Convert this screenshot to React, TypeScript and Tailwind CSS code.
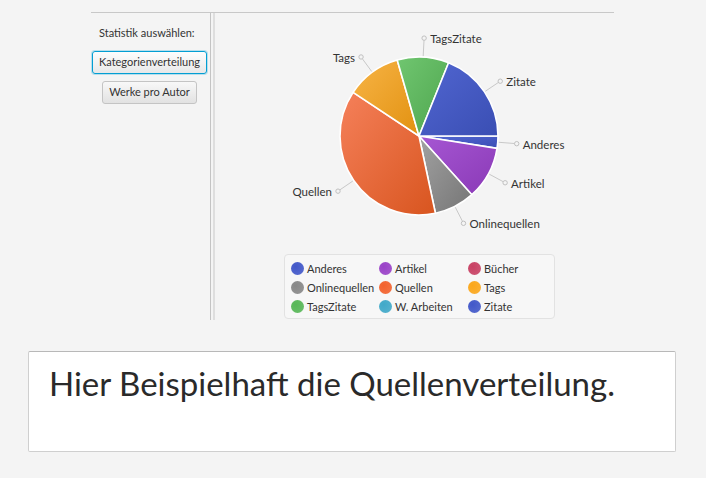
import React from 'react';

interface Slice {
  name: string;
  from: number;
  to: number;
  light: string;
  dark: string;
}

// angles in degrees, clockwise from east (screen coords)
const slices: Slice[] = [
  { name: 'Anderes', from: 0, to: 9, light: '#5468d4', dark: '#3a4eb5' },
  { name: 'Artikel', from: 9, to: 48, light: '#a657d3', dark: '#8a39b6' },
  { name: 'Onlinequellen', from: 48, to: 78, light: '#a2a2a2', dark: '#757575' },
  { name: 'Quellen', from: 78, to: 213.5, light: '#f5805a', dark: '#d8551f' },
  { name: 'Tags', from: 213.5, to: 254, light: '#f7b446', dark: '#e29110' },
  { name: 'TagsZitate', from: 254, to: 292, light: '#70c670', dark: '#4ea54e' },
  { name: 'Zitate', from: 292, to: 360, light: '#5166d1', dark: '#3a4eb3' },
];

const legend = [
  { name: 'Anderes', color: '#4258c9' },
  { name: 'Artikel', color: '#9a42c8' },
  { name: 'Bücher', color: '#c84164' },
  { name: 'Onlinequellen', color: '#888888' },
  { name: 'Quellen', color: '#f3622d' },
  { name: 'Tags', color: '#fba71b' },
  { name: 'TagsZitate', color: '#57b757' },
  { name: 'W. Arbeiten', color: '#41a9c9' },
  { name: 'Zitate', color: '#4258c9' },
];

const FONT = '"Lato", "Open Sans", sans-serif';

const CX = 419;
const CY = 136;
const R = 79;

const pt = (deg: number, r: number) => {
  const a = (deg * Math.PI) / 180;
  return [CX + r * Math.cos(a), CY + r * Math.sin(a)];
};

function PieChart() {
  return (
    <svg width={399} height={236} viewBox="215 13 399 236" className="block">
      <defs>
        {slices.map((s) => (
          <linearGradient key={s.name} id={`g-${s.name}`} x1="0" y1="0" x2="1" y2="1">
            <stop offset="0%" stopColor={s.light} />
            <stop offset="100%" stopColor={s.dark} />
          </linearGradient>
        ))}
      </defs>
      {slices.map((s) => {
        const [x1, y1] = pt(s.from, R);
        const [x2, y2] = pt(s.to, R);
        const large = s.to - s.from > 180 ? 1 : 0;
        return (
          <path
            key={s.name}
            d={`M${CX},${CY} L${x1},${y1} A${R},${R} 0 ${large} 1 ${x2},${y2} Z`}
            fill={`url(#g-${s.name})`}
            stroke="#ffffff"
            strokeWidth={1.6}
            strokeLinejoin="round"
          />
        );
      })}
      {slices.map((s) => {
        const mid = (s.from + s.to) / 2;
        const [ax, ay] = pt(mid, R + 1);
        const [bx, by] = pt(mid, 96);
        const [cx, cy] = pt(mid, 98);
        const right = Math.cos((mid * Math.PI) / 180) > -0.01;
        return (
          <g key={`l-${s.name}`}>
            <line x1={ax} y1={ay} x2={bx} y2={by} stroke="#c8c8c8" strokeWidth={1} />
            <circle cx={cx} cy={cy} r={2.2} fill="#f4f4f4" stroke="#c0c0c0" strokeWidth={1} />
            <text
              x={right ? cx + 6 : cx - 6}
              y={cy + 0.5}
              textAnchor={right ? 'start' : 'end'}
              dominantBaseline="central"
              fontSize={11.5}
              fill="#333333"
              style={{ fontFamily: FONT }}
            >
              {s.name}
            </text>
          </g>
        );
      })}
    </svg>
  );
}

function Legend() {
  return (
    <div className="ml-[69px] mt-[5px] w-[271px] h-[65px] rounded-[4px] border border-[#e2e2e2] bg-[#f7f7f7] grid grid-cols-[88px_89px_1fr] content-start pt-[5px] pl-[6px] gap-y-[3px]">
      {legend.map((l) => (
        <div key={l.name} className="flex items-center gap-[3px] h-[16px]">
          <span
            className="w-[13px] h-[13px] rounded-full shrink-0"
            style={{ background: `radial-gradient(circle at 35% 35%, ${l.color}, ${l.color}dd)` }}
          />
          <span className="text-[11px] text-[#333333] whitespace-nowrap leading-none">{l.name}</span>
        </div>
      ))}
    </div>
  );
}

export default function App() {
  return (
    <div className="w-[706px] h-[478px] bg-[#f4f4f4] overflow-hidden" style={{ fontFamily: FONT }}>
      {/* Top area */}
      <div className="pt-[12px] pl-[91px]">
        <div className="w-[523px] h-[308px] border-t border-[#c8c8c8] flex">
          {/* Left panel */}
          <div className="w-[119px] flex flex-col pt-[12px]">
            <span className="ml-[8px] text-[11px] text-[#333333] leading-[15px]">Statistik auswählen:</span>
            <button className="mt-[11px] ml-[1px] w-[115px] h-[23px] rounded-[3px] border border-[#039ed3] bg-gradient-to-b from-[#fdfdfd] to-[#e8e8e8] text-[11px] text-[#333333] shadow-[0_0_0_1px_rgba(3,158,211,0.25)]">
              Kategorienverteilung
            </button>
            <button className="mt-[7px] ml-[11px] w-[95px] h-[23px] rounded-[3px] border border-[#c4c4c4] bg-gradient-to-b from-[#f8f8f8] to-[#e2e2e2] text-[11px] text-[#333333]">
              Werke pro Autor
            </button>
          </div>
          {/* Divider */}
          <div className="w-[5px] flex">
            <div className="w-[1px] bg-[#c4c4c4]" />
            <div className="w-[2px]" />
            <div className="w-[2px] bg-[#dedede]" />
          </div>
          {/* Chart */}
          <div className="flex-1 flex flex-col">
            <PieChart />
            <Legend />
          </div>
        </div>
      </div>

      {/* Text box */}
      <div className="ml-[28px] mt-[31px] w-[648px] h-[101px] bg-white border border-[#cfcfcf] border-t-[#b8b8b8] rounded-[2px] pl-[20px] pt-[11px]">
        <p className="text-[33px] text-[#2a2a2a] leading-[40px]">Hier Beispielhaft die Quellenverteilung.</p>
      </div>
    </div>
  );
}
